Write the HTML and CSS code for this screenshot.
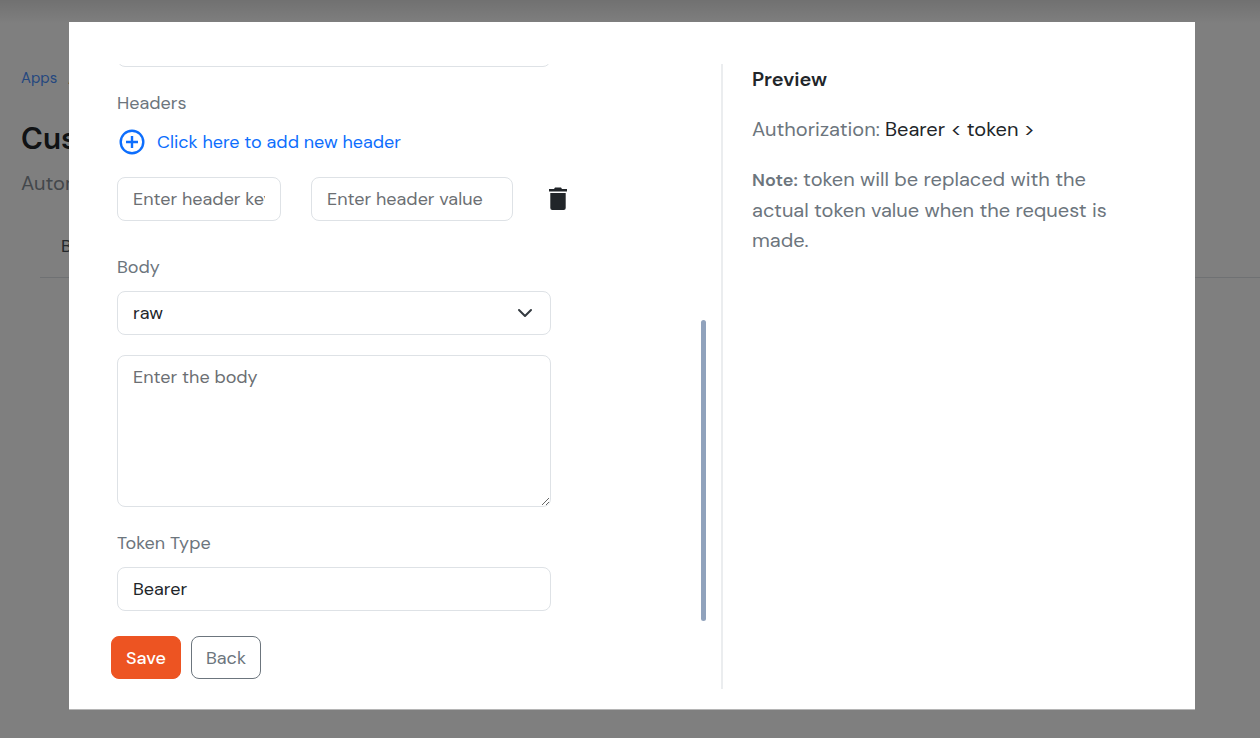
FILE: index.html
```
<!DOCTYPE html>
<html lang="en">
<head>
    <meta charset="UTF-8">
    <meta name="viewport" content="width=device-width, initial-scale=1.0">
    <title>Custom App</title>
    <link rel="stylesheet" href="styles.css">
</head>
<body>
    <!-- Page behind the modal -->
    <div class="page">
        <nav class="breadcrumb"><a href="#">Apps</a> <span>/</span></nav>
        <h1 class="page-title">Custom</h1>
        <p class="page-text">Automation</p>
        <div class="tabs"><span>Basic</span></div>
    </div>

    <div class="overlay">
        <div class="modal" role="dialog" aria-label="Authentication">
            <form class="form-side">
                <div class="scroll-wrap">
                    <div class="scroll-area">
                        <div class="fields">
                            <input type="text" class="control" aria-label="Parameters">

                            <div class="label headers-label">Headers</div>
                            <button type="button" class="add-button">
                                <svg width="26" height="26" viewBox="0 0 26 26" fill="none" stroke="currentColor" stroke-width="2.4">
                                    <circle cx="13" cy="13" r="11.3"/>
                                    <path d="M13 7v12M7 13h12"/>
                                </svg>
                                Click here to add new header
                            </button>
                            <div class="header-row">
                                <input type="text" class="control header-key" placeholder="Enter header key" aria-label="Header key">
                                <input type="text" class="control header-value" placeholder="Enter header value" aria-label="Header value">
                                <button type="button" class="delete-button" aria-label="Delete header">
                                    <svg width="18" height="24" viewBox="0 0 18 24" fill="currentColor">
                                        <path d="M0 2h5l1-1.500h6l1 1.500h5v2.500H0z"/>
                                        <path d="M1.300 6h15.400v15a2 2 0 0 1-2 2H3.300a2 2 0 0 1-2-2z"/>
                                    </svg>
                                </button>
                            </div>

                            <label class="label body-label" for="bodyType">Body</label>
                            <select class="control select" id="bodyType">
                                <option>raw</option>
                            </select>
                            <textarea class="control area" placeholder="Enter the body" aria-label="Body content"></textarea>

                            <label class="label token-label" for="tokenType">Token Type</label>
                            <input type="text" class="control" id="tokenType" value="Bearer">
                        </div>
                    </div>
                    <div class="scroll-track"><div class="scroll-thumb"></div></div>
                </div>
                <div class="actions">
                    <button type="button" class="button save">Save</button>
                    <button type="button" class="button back">Back</button>
                </div>
            </form>

            <section class="preview">
                <h2>Preview</h2>
                <p>Authorization: <span class="value">Bearer &lt; token &gt;</span></p>
                <p><strong>Note:</strong> token will be replaced with the actual token value when the request is made.</p>
            </section>
        </div>
    </div>
</body>
</html>
```
FILE: styles.css
```
* {
    box-sizing: border-box;
}
body {
    margin: 0;
    font-family: "DM Sans", Inter, sans-serif;
    font-size: 18px;
    line-height: 24px;
    color: #212529;
    background: #fff;
    height: 100vh;
    overflow: hidden;
}
button, input, select, textarea {
    font: inherit;
    color: inherit;
}

/* Page behind the modal */
.page {
    padding: 66px 0 0 21px;
    background: linear-gradient(to bottom, #e2e2e2, #fff 24px);
}
.breadcrumb {
    display: flex;
    gap: 11px;
    font-size: 15px;
}
.breadcrumb a {
    color: #4a90ff;
    text-decoration: none;
}
.page-title {
    margin: 29px 0 0;
    font-size: 30px;
    font-weight: 600;
    line-height: 40px;
}
.page-text {
    margin: 12px 0 0;
    font-size: 20px;
    color: #868e96;
}
.tabs {
    margin: 39px 0 0 19px;
    padding: 0 0 19px 21px;
    border-bottom: 1px solid #dee2e6;
    color: #495057;
}

/* Modal */
.overlay {
    position: fixed;
    inset: 0;
    padding: 22px 65px 28px 69px;
    background: rgba(0, 0, 0, 0.5);
}
.modal {
    display: grid;
    grid-template-columns: 610fr 432fr;
    height: 100%;
    padding: 42px 42px 20px;
    border-bottom: 1px solid #b5b5b5;
    background: #fff;
}
.form-side {
    display: flex;
    flex-direction: column;
    min-height: 0;
}
.scroll-wrap {
    display: flex;
    flex: 1;
    min-height: 0;
    padding-right: 15px;
}
/* column-reverse keeps the list scrolled to its end */
.scroll-area {
    flex: 1;
    display: flex;
    flex-direction: column-reverse;
    overflow-y: auto;
    scrollbar-width: none;
}
.fields {
    width: 100%;
    max-width: 446px;
    padding: 0 6px 10px;
}
.scroll-track {
    display: flex;
    align-items: flex-end;
    width: 5px;
}
.scroll-thumb {
    width: 100%;
    height: 54%;
    border-radius: 3px;
    background: #90a2bc;
}

/* Fields */
.label {
    display: block;
    margin-bottom: 12px;
    color: #6c757d;
}
.control {
    display: block;
    width: 100%;
    height: 44px;
    padding: 9px 15px;
    border: 1px solid #dee2e6;
    border-radius: 8px;
    background: #fff;
    outline: none;
}
.control::placeholder {
    color: #6c6f73;
}
.area {
    height: 152px;
    margin-top: 20px;
    resize: vertical;
}
.select {
    appearance: none;
    background: #fff url("data:image/svg+xml,%3Csvg xmlns='http://www.w3.org/2000/svg' viewBox='0 0 16 16'%3E%3Cpath fill='none' stroke='%23343a40' stroke-width='2' stroke-linecap='round' stroke-linejoin='round' d='m2 5 6 6 6-6'/%3E%3C/svg%3E") no-repeat right 17px center / 16px;
}
.headers-label, .token-label {
    margin-top: 24px;
}
.body-label {
    margin-top: 34px;
}
.add-button {
    display: flex;
    align-items: center;
    gap: 12px;
    height: 30px;
    margin-bottom: 20px;
    padding: 0 2px;
    border: none;
    background: none;
    color: #0d6efd;
    white-space: nowrap;
    cursor: pointer;
}
.header-row {
    display: flex;
    align-items: center;
    gap: 30px;
}
.header-key {
    width: 164px;
    flex-shrink: 0;
}
.header-value {
    width: 202px;
    flex-shrink: 0;
}
.delete-button {
    display: flex;
    flex-shrink: 0;
    padding: 0 6px;
    border: none;
    background: none;
    cursor: pointer;
}

/* Buttons */
.actions {
    display: flex;
    gap: 10px;
    padding: 15px 0 10px;
}
.button {
    height: 43px;
    padding: 0 14px;
    border: 1px solid #6c757d;
    border-radius: 8px;
    background: #fff;
    color: #6c757d;
    cursor: pointer;
}
.save {
    border-color: #ed5422;
    background: #ed5422;
    color: #fff;
    font-weight: 500;
}

/* Preview */
.preview {
    padding: 0 20px 0 29px;
    border-left: 2px solid #ebedef;
    font-size: 20px;
    line-height: 30px;
    color: #6c757d;
}
.preview h2 {
    margin: 0;
    font-size: 20px;
    font-weight: 600;
    color: #212529;
}
.preview p {
    margin: 20px 0 0;
}
.preview strong {
    font-size: 18px;
    font-weight: 600;
}
.value {
    color: #212529;
}
```
